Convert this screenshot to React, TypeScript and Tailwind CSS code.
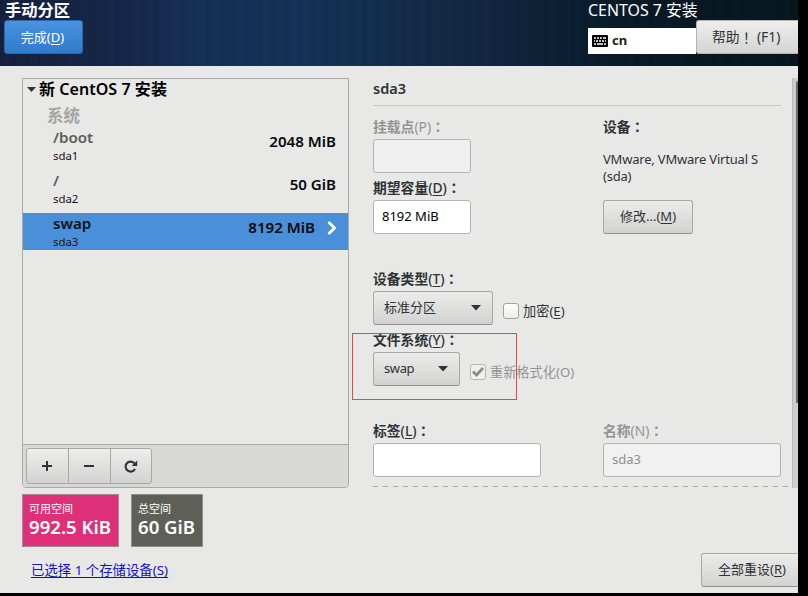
import React from 'react';
import clsx from 'clsx';

type LabelProps = {
  text: string;
  accel?: string;
  colon?: boolean;
  disabled?: boolean;
  className?: string;
};

function Label({ text, accel, colon = true, disabled, className }: LabelProps) {
  return (
    <div
      className={clsx(
        'h-5 whitespace-nowrap',
        colon ? 'text-[13.8px] font-semibold leading-[18px]' : 'text-[13.2px] leading-5',
        disabled && 'text-[#929493]',
        className
      )}
    >
      {text}
      {accel && (
        <span className={clsx(disabled ? 'font-normal' : colon && 'font-medium')}>
          (<span className={clsx(!disabled && 'underline underline-offset-2')}>{accel}</span>)
        </span>
      )}
      {colon && <span className="font-['Noto_Sans_CJK_TC',sans-serif]">：</span>}
    </div>
  );
}

const button =
  'flex items-center whitespace-nowrap rounded-[3px] border border-[#a8a8a8] border-b-[#8f8f8f] bg-linear-to-b from-[#ececeb] to-[#d2d2d0] text-[13px] text-[#2e3436]';

const partitions = [
  { mount: '/boot', device: 'sda1', size: '2048 MiB', selected: false },
  { mount: '/', device: 'sda2', size: '50 GiB', selected: false },
  { mount: 'swap', device: 'sda3', size: '8192 MiB', selected: true },
];

function Header() {
  return (
    <header className="flex h-[66px] justify-between bg-[repeating-linear-gradient(90deg,rgba(0,0,0,0.07)_0,transparent_5px,transparent_9px,rgba(0,0,0,0.07)_13px),linear-gradient(90deg,#17213f_0%,#15284a_15%,#163157_25%,#163259_37%,#142e4e_48%,#11273f_62%,#0c2036_70%,#081b28_78%,#07171e_100%)] text-white">
      <div className="pl-1">
        <div className="h-5 pl-px text-[16.3px] font-bold leading-5">手动分区</div>
        <button className="flex h-[34px] w-[79px] items-center justify-center rounded-[3px] border border-[#2a68ab] bg-linear-to-b from-[#4993df] to-[#2f7bcb] pr-0.5 pt-px text-[13px]">
          完成(<span className="underline underline-offset-2">D</span>)
        </button>
      </div>
      <div className="w-[210px]">
        <div className="h-5 whitespace-nowrap text-[15.9px] leading-5">CENTOS 7 安装</div>
        <div className="flex">
          <div className="mt-2 flex h-[26px] w-[108px] items-center gap-1 bg-white pl-1 text-[13px] font-bold text-[#1c1c1c]">
            <svg width="16" height="12" viewBox="0 0 16 12">
              <rect width="16" height="12" rx="1" fill="#000" />
              <path
                d="M2 3h2M5 3h2M8 3h2M11 3h3M2 6h1M4 6h2M7 6h2M10 6h2M13 6h1M2 9h2M5 9h6M12 9h2"
                stroke="#fff"
                strokeWidth="1.6"
              />
            </svg>
            cn
          </div>
          <button className="flex h-[34px] w-[102px] items-center whitespace-nowrap rounded-l-[3px] border border-r-0 border-[#b4b4b2] bg-linear-to-b from-[#eeeeed] to-[#d4d4d2] pl-[15px] pt-px text-[13.8px] text-[#2e3436]">
            帮助<span className="font-['Noto_Sans_CJK_TC',sans-serif]">！</span>&nbsp;(F1)
          </button>
        </div>
      </div>
    </header>
  );
}

function PartitionList() {
  return (
    <div className="flex h-[410px] flex-col rounded-b-[4px] border border-[#a9aaa8]">
      <div className="flex h-5 items-center whitespace-nowrap pl-1 text-[16px] font-semibold text-black">
        <svg width="9" height="5" viewBox="0 0 9 5" className="mr-[3px]">
          <path d="M0 0h9L4.5 5z" fill="#2e3436" />
        </svg>
        <span className="tracking-[0.05px]">新 CentOS 7 安装</span>
      </div>
      <div className="h-7 pl-[24px] text-[16.5px] font-semibold leading-[34px] text-[#a5a5a3]">系统</div>
      {partitions.map(p => (
        <div
          key={p.device}
          className={clsx('mb-1.5 flex h-[37px] justify-between pl-[30px] pr-3', p.selected && 'bg-[#4a90d9]')}
        >
          <div className="pt-px">
            <div className={clsx('h-5 text-[15.1px] font-semibold leading-[18px]', p.selected ? 'text-[#081420]' : 'text-[#5b5c5b]')}>
              {p.mount}
            </div>
            <div className="text-[11.4px] leading-4 text-[#141414]">{p.device}</div>
          </div>
          <div className="flex h-[29px] items-center text-[15.1px] font-semibold text-[#05080c]">
            {p.size}
            {p.selected && (
              <svg width="9" height="14" viewBox="0 0 9 14" className="ml-3">
                <path d="M1.5 1l6 6-6 6" fill="none" stroke="#fff" strokeWidth="2.8" />
              </svg>
            )}
          </div>
        </div>
      ))}
      <div className="mt-auto flex h-[43px] items-center rounded-b-[3px] border-t border-[#a9aaa8] bg-[#d8d8d6] pl-[3px]">
        <div className="flex h-9 w-[126px] rounded-[3px] border border-[#a8a8a8] bg-linear-to-b from-[#eeeeed] to-[#d2d2d0]">
          <button className="flex w-[42px] items-center justify-center border-r border-[#a8a8a8] pr-px">
            <svg width="10" height="10" viewBox="0 0 10 10">
              <path d="M5 0v10M0 5h10" stroke="#2e3436" strokeWidth="2" />
            </svg>
          </button>
          <button className="flex w-[42px] items-center justify-center border-r border-[#a8a8a8] pr-px">
            <svg width="10" height="10" viewBox="0 0 10 10">
              <path d="M0 5h10" stroke="#2e3436" strokeWidth="2" />
            </svg>
          </button>
          <button className="flex flex-1 items-center pl-[13px]">
            <svg width="14" height="13" viewBox="0 0 14 13">
              <path d="M10.3 3.2A5 5 0 1 0 11 9" fill="none" stroke="#2e3436" strokeWidth="2.1" />
              <path d="M13.2 0.4v5.6H7.6z" fill="#2e3436" />
            </svg>
          </button>
        </div>
      </div>
    </div>
  );
}

function Details() {
  return (
    <section className="flex flex-1 justify-between pt-px">
      <div className="flex h-[408px] w-[419px] flex-col">
        <div className="w-[408px] border-b border-[#c9cac8]">
          <div className="h-[26px] text-[14.5px] font-semibold leading-[18px]">sda3</div>
        </div>
        <div className="flex h-[152px] pt-[11px]">
          <div className="w-[230px]">
            <Label text="挂载点" accel="P" disabled />
            <div className="mt-[2px] h-[34px] w-[98px] rounded-[3px] border border-[#b4b5b3] bg-[#efefef]" />
            <Label text="期望容量" accel="D" className="mt-[5px]" />
            <div className="mt-[2px] flex h-[34px] w-[98px] items-center rounded-[3px] border border-[#b4b5b3] bg-white pl-2 text-black">
              8192 MiB
            </div>
          </div>
          <div className="w-[180px]">
            <Label text="设备" />
            <div className="mt-3.5 h-[34px] leading-[17px] tracking-[-0.2px]">VMware, VMware Virtual S (sda)</div>
            <button className={clsx(button, 'mt-[15px] h-[34px] w-[90px] pl-4')}>
              修改...(<span className="underline underline-offset-2">M</span>)
            </button>
          </div>
        </div>
        <div className="h-[152px] pt-[11px]">
          <Label text="设备类型" accel="T" />
          <div className="mt-[2px] flex items-center">
            <button className={clsx(button, 'h-[34px] w-[120px] justify-between pl-2.5 pr-[11px]')}>
              标准分区
              <svg width="10" height="6" viewBox="0 0 10 6">
                <path d="M0 0h10L5 5.5z" fill="#2e3436" />
              </svg>
            </button>
            <span className="ml-2.5 mt-1.5 h-4 w-4 rounded-[3px] border border-[#a0a1a0] bg-linear-to-b from-white to-[#ececeb]" />
            <Label text="加密" accel="E" colon={false} className="ml-1 mt-1.5" />
          </div>
          <Label text="文件系统" accel="Y" className="mt-[5px]" />
          <div className="mt-[2px] flex items-center">
            <button className={clsx(button, 'h-[34px] w-[87px] justify-between pl-2.5 pr-[11px]')}>
              <span className="tracking-[-0.4px]">swap</span>
              <svg width="10" height="6" viewBox="0 0 10 6">
                <path d="M0 0h10L5 5.5z" fill="#2e3436" />
              </svg>
            </button>
            <span className="ml-2.5 mt-1.5 flex h-4 w-4 items-center justify-center rounded-[3px] border border-[#b4b5b3] bg-[#f0f0ef]">
              <svg width="12" height="10" viewBox="0 0 12 10">
                <path d="M1 4.5l3.5 3.5L11 1" fill="none" stroke="#8b8d8c" strokeWidth="2.8" />
              </svg>
            </span>
            <Label text="重新格式化" accel="O" colon={false} disabled className="ml-1 mt-1.5" />
          </div>
        </div>
        <div className="flex pt-[11px]">
          <div className="w-[230px]">
            <Label text="标签" accel="L" />
            <div className="mt-[2px] h-[34px] w-[168px] rounded-[3px] border border-[#b4b5b3] bg-white" />
          </div>
          <div>
            <Label text="名称" accel="N" disabled />
            <div className="mt-[2px] flex h-[34px] w-[178px] items-center rounded-[3px] border border-[#b4b5b3] bg-[#f1f1f1] pl-2 text-[#8f9190]">
              sda3
            </div>
          </div>
        </div>
        <div className="mt-auto h-px bg-[repeating-linear-gradient(90deg,#a9aaa8_0,#a9aaa8_5px,transparent_5px,transparent_10px)]" />
      </div>
      <div className="-mt-px h-[410px] w-1.5 border-l border-[#bcbdbb] bg-[#cccdcc] pl-[3px] pt-[3px]">
        <div className="h-[322px] w-0.5 rounded-tl-[2px] bg-[#6b6d6e]" />
      </div>
    </section>
  );
}

export default function App() {
  return (
    <div className="h-[596px] w-[808px] overflow-hidden bg-black font-['Noto_Sans','Noto_Sans_CJK_SC',sans-serif] text-[13px] text-[#2e3436]">
      <div className="relative h-[593px] w-[798px] overflow-hidden bg-[#e8e8e7]">
        <Header />
        <main className="flex pl-[22px] pt-3">
          <div className="mr-6 w-[327px] shrink-0">
            <PartitionList />
          </div>
          <Details />
        </main>
        <footer className="flex justify-between pl-[22px] pt-1.5">
          <div>
            <div className="flex gap-3 text-white">
              <div className="h-[53px] w-[97px] whitespace-nowrap border border-[#a08b95] bg-[#dd3079] pl-1.5 pt-1.5">
                <div className="text-[11px] leading-4">可用空间</div>
                <div className="text-[18.6px] font-semibold leading-5">992.5 KiB</div>
              </div>
              <div className="h-[53px] w-[72px] whitespace-nowrap border border-[#8d8f8a] bg-[#5e5f58] pl-1.5 pt-1.5">
                <div className="text-[11px] leading-4">总空间</div>
                <div className="text-[18.6px] font-semibold leading-5">60 GiB</div>
              </div>
            </div>
            <a className="ml-[9px] mt-[13px] block text-[13.4px] leading-5 text-[#1410c8] underline underline-offset-2">
              已选择 1 个存储设备(S)
            </a>
          </div>
          <button className={clsx(button, 'mt-[59px] h-[34px] w-[97px] rounded-r-none border-r-0 pl-4')}>
            全部重设(<span className="underline underline-offset-2">R</span>)
          </button>
        </footer>
        {/* highlight around the file system field */}
        <div className="absolute left-[352px] top-[333px] h-[67px] w-[165px] border border-[#e04a4c]" />
      </div>
    </div>
  );
}
